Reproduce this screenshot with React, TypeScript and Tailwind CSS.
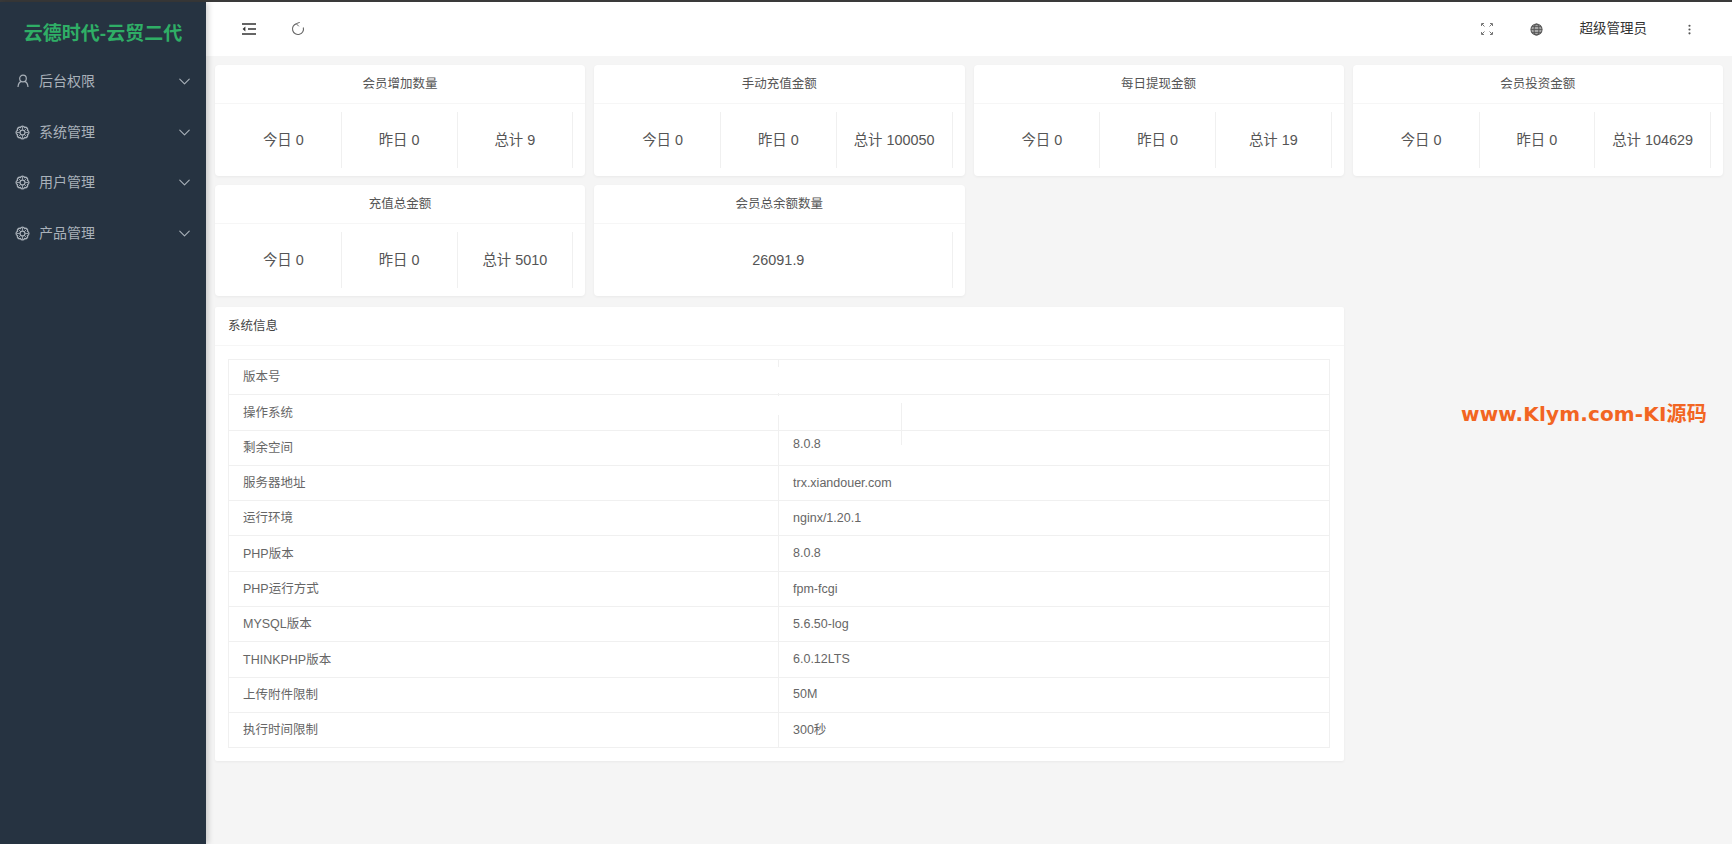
import { ChevronDown, EllipsisVertical } from "lucide-react";

const FONT = "font-['Liberation_Sans','Noto_Sans_CJK_SC',sans-serif]";

function UserIcon() {
  return (
    <svg viewBox="0 0 14 14" className="w-[14px] h-[14px]" fill="none" stroke="currentColor" strokeWidth="1.2">
      <circle cx="7" cy="4.5" r="3.3" />
      <path d="M2 13c.3-3.4 2-5.2 3.2-5.4M12 13c-.3-3.4-2-5.2-3.2-5.4" />
    </svg>
  );
}

function FlowerIcon() {
  return (
    <svg viewBox="0 0 14 14" className="w-[15px] h-[15px] -ml-[1px] shrink-0" fill="none" stroke="currentColor" strokeWidth="1.15">
      <circle cx="7" cy="7" r="2.3" />
      <path d="M11.62 8.91A2 2 0 0 1 8.91 11.62A2 2 0 0 1 5.09 11.62A2 2 0 0 1 2.38 8.91A2 2 0 0 1 2.38 5.09A2 2 0 0 1 5.09 2.38A2 2 0 0 1 8.91 2.38A2 2 0 0 1 11.62 5.09A2 2 0 0 1 11.62 8.91Z" />
      <path d="M7 1.500V4.500M7 9.500V12.500M1.500 7H4.500M9.500 7H12.500M3.100 3.100 5.300 5.300M10.900 3.100 8.700 5.300M3.100 10.900 5.300 8.700M10.900 10.900 8.700 8.700" strokeWidth="0.8" />
    </svg>
  );
}

function IndentIcon() {
  return (
    <svg viewBox="0 0 14 12" className="w-[14px] h-[12px]" fill="none" stroke="#333" strokeWidth="1.3">
      <path d="M0 1h14M6 6h8M0 11h14" />
      <path d="M3.4 3.6 0.6 6l2.8 2.4z" fill="#333" stroke="none" />
    </svg>
  );
}

function RefreshIcon() {
  return (
    <svg viewBox="0 0 14 14" className="w-[14px] h-[14px]" fill="none" stroke="#666" strokeWidth="1.1">
      <path d="M5.400 1.700A5.500 5.500 0 1 0 12.300 5.500" />
      <path d="M8.800 0.300 5.200 1.700 7.800 4.300" strokeWidth="1" />
    </svg>
  );
}

function FullIcon() {
  return (
    <svg viewBox="0 0 12 12" className="w-[12px] h-[12px]" fill="none" stroke="#777" strokeWidth="1">
      <path d="M.5 3V.5H3M9 .5h2.500V3M11.500 9v2.500H9M3 11.500H.5V9M1 1l2.500 2.500M11 1 8.500 3.500M11 11 8.500 8.500M1 11l2.500-2.500" />
    </svg>
  );
}

function GlobeIcon() {
  return (
    <svg viewBox="0 0 14 14" className="w-[13px] h-[13px]" fill="#a8a8a8" stroke="#555" strokeWidth="1.1">
      <circle cx="7" cy="7" r="6" />
      <ellipse cx="7" cy="7" rx="2.600" ry="6" fill="none" />
      <path d="M1 7h12M2 3.800h10M2 10.200h10" fill="none" strokeWidth="0.9" />
    </svg>
  );
}

const menus = [
  { label: "后台权限", icon: <UserIcon /> },
  { label: "系统管理", icon: <FlowerIcon /> },
  { label: "用户管理", icon: <FlowerIcon /> },
  { label: "产品管理", icon: <FlowerIcon /> },
];

const cards: { title: string; cols: string[] }[] = [
  { title: "会员增加数量", cols: ["今日 0", "昨日 0", "总计 9"] },
  { title: "手动充值金额", cols: ["今日 0", "昨日 0", "总计 100050"] },
  { title: "每日提现金额", cols: ["今日 0", "昨日 0", "总计 19"] },
  { title: "会员投资金额", cols: ["今日 0", "昨日 0", "总计 104629"] },
  { title: "充值总金额", cols: ["今日 0", "昨日 0", "总计 5010"] },
  { title: "会员总余额数量", cols: ["26091.9"] },
];

const rows = [
  ["版本号", ""],
  ["操作系统", ""],
  ["剩余空间", "8.0.8"],
  ["服务器地址", "trx.xiandouer.com"],
  ["运行环境", "nginx/1.20.1"],
  ["PHP版本", "8.0.8"],
  ["PHP运行方式", "fpm-fcgi"],
  ["MYSQL版本", "5.6.50-log"],
  ["THINKPHP版本", "6.0.12LTS"],
  ["上传附件限制", "50M"],
  ["执行时间限制", "300秒"],
];

export default function App() {
  return (
    <div className={`${FONT} h-[844px] w-[1732px] overflow-hidden flex flex-col bg-[#f5f5f5]`}>
      <div className="h-[2px] shrink-0 bg-[#3a3a3a]" />
      <div className="flex flex-1 min-h-0">
        <aside className="w-[206px] shrink-0 bg-[#263341] shadow-[2px_0_6px_rgba(0,0,0,0.2)] z-10">
          <div className="h-[54px] pt-[11px] flex items-center justify-center text-[19px] font-bold text-[#2fae66]">
            云德时代-云贸二代
          </div>
          <nav className="flex flex-col">
            {menus.map((m) => (
              <div key={m.label} className="h-[50.8px] pl-[16px] pr-[12px] flex items-center text-[#a9b1b9] text-[14px]">
                <span className="w-[14px] mr-[9px] flex">{m.icon}</span>
                <span className="flex-1">{m.label}</span>
                <ChevronDown size={19} strokeWidth={1.4} />
              </div>
            ))}
          </nav>
        </aside>
        <div className="flex-1 min-w-0 flex flex-col">
          <header className="h-[54px] shrink-0 bg-white flex items-center text-[#333]">
            <div className="ml-[36px] flex"><IndentIcon /></div>
            <div className="ml-[35px] flex"><RefreshIcon /></div>
            <div className="flex-1" />
            <div className="flex"><FullIcon /></div>
            <div className="ml-[37px] flex"><GlobeIcon /></div>
            <div className="ml-[37px] text-[13.500px] text-[#333]">超级管理员</div>
            <div className="ml-[36px] mr-[36px] flex text-[#555]"><EllipsisVertical size={13} strokeWidth={2} /></div>
          </header>
          <main className="flex-1 min-h-0 pt-[9px] pl-[9px] pr-[9px]">
            <div className="grid grid-cols-4 gap-x-[9px] gap-y-[9px]">
              {cards.map((c) => (
                <section key={c.title} className="h-[111px] bg-white rounded-[4px] shadow-[0_1px_3px_rgba(0,0,0,0.05)] flex flex-col">
                  <div className="h-[39px] pt-[1px] flex items-center justify-center border-b border-[#f6f6f6] text-[12.500px] text-[#555]">{c.title}</div>
                  <div className="flex-1 pl-[11px] pr-[12px] py-[8px] flex">
                    {c.cols.map((t) => (
                      <div key={t} className="flex-1 pt-[2px] flex items-center justify-center border-r border-[#f0f0f0] text-[14.400px] text-[#555]">{t}</div>
                    ))}
                  </div>
                </section>
              ))}
            </div>
            <section className="mt-[11px] w-[1129px] h-[454px] bg-white shadow-[0_1px_3px_rgba(0,0,0,0.05)] rounded-[2px] flex flex-col">
              <div className="h-[39px] shrink-0 px-[13px] flex items-center border-b border-[#f6f6f6] text-[12.500px] text-[#444]">系统信息</div>
              <div className="p-[13px] relative">
                <div className="border-t border-l border-[#f0f0f0] w-[1102px]">
                  {rows.map(([k, v], i) => (
                    <div key={k} className="h-[35.300px] flex items-center border-b border-r border-[#f0f0f0] text-[12.500px] text-[#666]">
                      <div className="w-[550px] h-full flex items-center px-[14px] border-r border-[#f0f0f0] pt-[1px]">{k}</div>
                      <div className={i === 2 ? "px-[14px] -translate-y-[3px]" : "px-[14px]"}>{v}</div>
                    </div>
                  ))}
                </div>
                <div className="absolute left-[561px] top-[21px] w-[4px] h-[26px] bg-white" />
                <div className="absolute left-[561px] top-[50px] w-[4px] h-[19px] bg-white" />
                <div className="absolute left-[686px] top-[57px] w-px h-[42px] bg-[#f0f0f0]" />
              </div>
            </section>
          </main>
        </div>
      </div>
      <div className="absolute left-[1461px] top-[401px] text-[20px] font-bold tracking-[0.15px] text-[#f26522] font-['DejaVu_Sans','Noto_Sans_CJK_SC',sans-serif] leading-[26px] whitespace-nowrap">www.Klym.com-KI源码</div>
    </div>
  );
}
